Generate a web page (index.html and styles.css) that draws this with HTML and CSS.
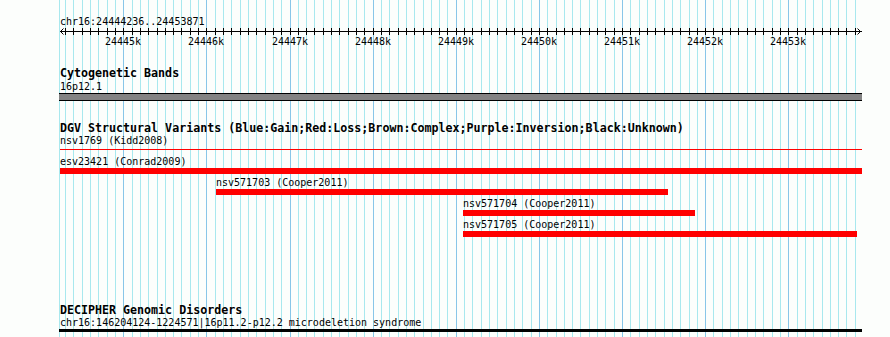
FILE: index.html
```html
<!DOCTYPE html>
<html lang="en">
<head>
  <meta charset="UTF-8" />
  <title>chr16:24444236..24453871</title>
  <link rel="stylesheet" href="styles.css">
</head>
<body>
  <div class="panel">
    <!-- grid lines are filled in by the script below -->
    <div class="grid" id="grid"></div>

    <div class="track ruler">
      <div class="ruler-title">chr16:24444236..24453871</div>
      <svg class="axis" id="axis" width="803" height="7">
        <line x1="1" y1="3.5" x2="803" y2="3.5" />
        <polyline points="4.5,0.5 1.5,3.5 4.5,6.5" />
        <polyline points="798.5,0.5 801.5,3.5 798.5,6.5" />
      </svg>
      <div class="tick-labels" id="tickLabels"></div>
    </div>

    <div class="track cyto">
      <div class="track-title">Cytogenetic Bands</div>
      <div class="label">16p12.1</div>
      <div class="band"></div>
    </div>

    <div class="track dgv">
      <div class="track-title">DGV Structural Variants (Blue:Gain;Red:Loss;Brown:Complex;Purple:Inversion;Black:Unknown)</div>
      <div class="label">nsv1769 (Kidd2008)</div>
      <div class="thin-line" style="margin-left:1px;width:802px"></div>

      <div class="feature first" style="margin-left:1px;width:802px">
        <div class="feature-label">esv23421 (Conrad2009)</div>
        <div class="bar"></div>
      </div>
      <div class="feature" style="margin-left:157px;width:452px">
        <div class="feature-label">nsv571703 (Cooper2011)</div>
        <div class="bar"></div>
      </div>
      <div class="feature" style="margin-left:404px;width:232px">
        <div class="feature-label">nsv571704 (Cooper2011)</div>
        <div class="bar"></div>
      </div>
      <div class="feature" style="margin-left:404px;width:394px">
        <div class="feature-label">nsv571705 (Cooper2011)</div>
        <div class="bar"></div>
      </div>
    </div>

    <div class="track decipher">
      <div class="track-title">DECIPHER Genomic Disorders</div>
      <div class="label">chr16:146204124-1224571|16p11.2-p12.2 microdeletion syndrome</div>
      <div class="black-bar"></div>
    </div>
  </div>

  <script>
    var start = 24444236;
    var end = 24453871;
    var scale = 0.083125; // pixels per base

    function toPx(bp) {
      return Math.round(0.8 + (bp - start) * scale);
    }

    var grid = document.getElementById('grid');
    var axis = document.getElementById('axis');
    var tickLabels = document.getElementById('tickLabels');

    // left edge line
    grid.innerHTML = '<div class="grid-line" style="left:0px"></div>';

    var first = Math.ceil(start / 100) * 100;
    for (var bp = first; bp < end; bp += 100) {
      var x = toPx(bp);
      var major = bp % 1000 === 0;
      grid.innerHTML += '<div class="grid-line' + (major ? ' major' : '') + '" style="left:' + x + 'px"></div>';

      var tick = document.createElementNS('http://www.w3.org/2000/svg', 'line');
      tick.setAttribute('x1', x + 0.5);
      tick.setAttribute('x2', x + 0.5);
      tick.setAttribute('y1', 0);
      tick.setAttribute('y2', 7);
      axis.appendChild(tick);

      if (major) {
        tickLabels.innerHTML += '<span class="tick-label" style="left:' + x + 'px">' + (bp / 1000) + 'k</span>';
      }
    }
  </script>
</body>
</html>
```

FILE: styles.css
```css
body {
  margin: 0;
  background-color: #fcfefc;
  color: #000;
  font-family: "DejaVu Sans Mono", monospace;
  font-size: 10px;
}
.panel {
  position: relative;
  box-sizing: border-box;
  width: 890px;
  height: 337px;
  padding: 16px 0 0 59px;
  overflow: hidden;
}

/* background grid */
.grid {
  position: absolute;
  left: 59px;
  top: 0;
  bottom: 0;
  width: 803px;
}
.grid-line {
  position: absolute;
  top: 0;
  bottom: 0;
  width: 1px;
  background-color: #a8e8ee;
}
.grid-line.major {
  background-color: #88c6e8;
}

.track {
  position: relative;
  z-index: 1;
  width: 803px;
}

/* ruler */
.ruler-title {
  padding-left: 1px;
  line-height: 12px;
  height: 12px;
}
.axis {
  display: block;
  shape-rendering: crispEdges;
}
.axis line,
.axis polyline {
  stroke: #000;
  stroke-width: 1;
  fill: none;
}
.axis polyline {
  shape-rendering: auto;
}
.tick-labels {
  position: relative;
  height: 13px;
  line-height: 13px;
}
.tick-label {
  position: absolute;
  top: 0;
  transform: translateX(-50%);
  white-space: nowrap;
}

/* shared track text */
.track-title {
  padding-left: 1px;
  font-weight: bold;
  font-size: 11.65px;
  line-height: 12px;
  height: 12px;
  white-space: nowrap;
}
.label {
  padding-left: 1px;
  line-height: 13px;
  height: 13px;
  white-space: nowrap;
}

.cyto {
  margin-top: 19px;
}
.cyto .track-title {
  line-height: 13px;
  height: 13px;
}
.band {
  height: 6px;
  background-color: #838383;
  border-top: 1px solid #000;
  border-bottom: 1px solid #000;
}

.dgv {
  margin-top: 21px;
}
.thin-line {
  height: 1px;
  margin-top: 2px;
  background-color: #ff0000;
}
.feature {
  margin-top: 3px;
}
.feature.first {
  margin-top: 6px;
}
.feature-label {
  line-height: 12px;
  height: 12px;
  white-space: nowrap;
}
.bar {
  height: 6px;
  background-color: #ff0000;
}

.decipher {
  margin-top: 67px;
}
.black-bar {
  height: 3px;
  background-color: #000;
}
```
